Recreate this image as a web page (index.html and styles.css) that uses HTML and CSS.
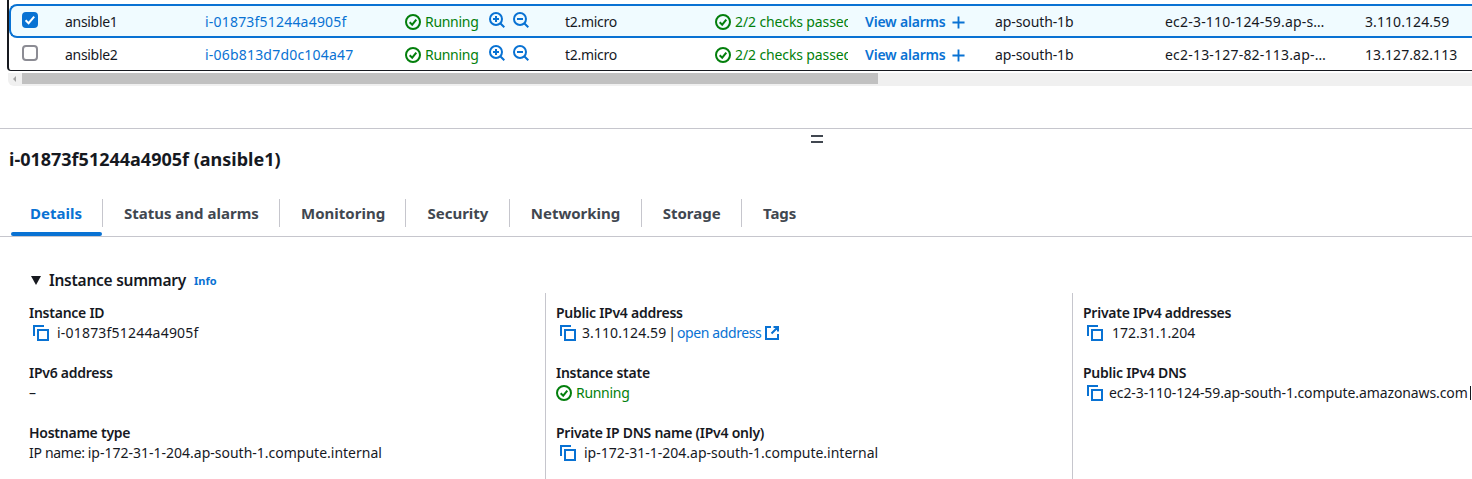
FILE: index.html
```html
<!DOCTYPE html>
<html lang="en">
<head>
    <meta charset="UTF-8">
    <meta name="viewport" content="width=device-width, initial-scale=1.0">
    <title>Instances</title>
    <link rel="stylesheet" href="styles.css">
</head>
<body>
    <svg class="icon-defs" aria-hidden="true">
        <symbol id="i-check" viewBox="0 0 16 16">
            <circle cx="8" cy="8" r="7" fill="none" stroke="currentColor" stroke-width="2"/>
            <path d="M4.7 8.2 7.2 10.7 11.3 5.6" fill="none" stroke="currentColor" stroke-width="2"/>
        </symbol>
        <symbol id="i-zoom-in" viewBox="0 0 16 16">
            <circle cx="7" cy="7" r="6" fill="none" stroke="currentColor" stroke-width="2"/>
            <path d="M11 11 15.3 15.3M4 7H10M7 4V10" fill="none" stroke="currentColor" stroke-width="2"/>
        </symbol>
        <symbol id="i-zoom-out" viewBox="0 0 16 16">
            <circle cx="7" cy="7" r="6" fill="none" stroke="currentColor" stroke-width="2"/>
            <path d="M11 11 15.3 15.3M4 7H10" fill="none" stroke="currentColor" stroke-width="2"/>
        </symbol>
        <symbol id="i-plus" viewBox="0 0 14 14">
            <path d="M0.5 7H13.5M7 0.5V13.5" fill="none" stroke="currentColor" stroke-width="2"/>
        </symbol>
        <symbol id="i-copy" viewBox="0 0 16 16">
            <path d="M1 11V1H11" fill="none" stroke="currentColor" stroke-width="2"/>
            <rect x="5" y="5" width="10" height="10" fill="none" stroke="currentColor" stroke-width="2"/>
        </symbol>
        <symbol id="i-external" viewBox="0 0 14 14">
            <path d="M6 1H1V13H13V8M8.5 1H13V5.5M13 1 6.5 7.5" fill="none" stroke="currentColor" stroke-width="2"/>
        </symbol>
    </svg>

    <div class="table">
        <div class="row row-selected">
            <span class="checkbox checked">
                <svg viewBox="0 0 16 16"><path d="M3.6 8.2 6.6 11.2 12.2 4.6" fill="none" stroke="#fff" stroke-width="2"/></svg>
            </span>
            <span class="tight">ansible1</span>
            <a href="#" class="wide-id">i-01873f51244a4905f</a>
            <span class="state">
                <span class="ok tight"><svg class="icon"><use href="#i-check"/></svg>Running</span>
                <svg class="zoom-icon first"><use href="#i-zoom-in"/></svg>
                <svg class="zoom-icon"><use href="#i-zoom-out"/></svg>
            </span>
            <span class="tight">t2.micro</span>
            <span class="checks ok"><svg class="icon"><use href="#i-check"/></svg>2/2 checks passed</span>
            <a href="#" class="alarms">View alarms <svg class="plus"><use href="#i-plus"/></svg></a>
            <span class="zone">ap-south-1b</span>
            <span class="wide-id">ec2-3-110-124-59.ap-s…</span>
            <span class="num">3.110.124.59</span>
        </div>
        <div class="row">
            <span class="checkbox"></span>
            <span class="tight">ansible2</span>
            <a href="#" class="wide-id">i-06b813d7d0c104a47</a>
            <span class="state">
                <span class="ok tight"><svg class="icon"><use href="#i-check"/></svg>Running</span>
                <svg class="zoom-icon first"><use href="#i-zoom-in"/></svg>
                <svg class="zoom-icon"><use href="#i-zoom-out"/></svg>
            </span>
            <span class="tight">t2.micro</span>
            <span class="checks ok"><svg class="icon"><use href="#i-check"/></svg>2/2 checks passed</span>
            <a href="#" class="alarms">View alarms <svg class="plus"><use href="#i-plus"/></svg></a>
            <span class="zone">ap-south-1b</span>
            <span class="wide-id">ec2-13-127-82-113.ap-…</span>
            <span class="num">13.127.82.113</span>
        </div>
    </div>
    <div class="scrollbar">
        <span class="scroll-arrow"></span>
        <span class="scroll-thumb"></span>
    </div>

    <div class="split">
        <div class="split-handle"></div>
    </div>

    <h1 class="title">i-01873f51244a4905f (ansible1)</h1>

    <div class="tabs">
        <a href="#" class="tab active">Details</a>
        <a href="#" class="tab">Status and alarms</a>
        <a href="#" class="tab">Monitoring</a>
        <a href="#" class="tab">Security</a>
        <a href="#" class="tab">Networking</a>
        <a href="#" class="tab">Storage</a>
        <a href="#" class="tab last">Tags</a>
    </div>

    <h2 class="section"><span class="caret"></span>Instance summary <a href="#" class="info">Info</a></h2>

    <div class="details">
        <div class="column">
            <div class="item">
                <div class="label">Instance ID</div>
                <div class="value"><svg class="copy"><use href="#i-copy"/></svg><span class="wide-id">i-01873f51244a4905f</span></div>
            </div>
            <div class="item">
                <div class="label">IPv6 address</div>
                <div class="value">–</div>
            </div>
            <div class="item">
                <div class="label">Hostname type</div>
                <div class="value"><span class="prefix">IP name:</span>ip-172-31-1-204.ap-south-1.compute.internal</div>
            </div>
        </div>
        <div class="column">
            <div class="item">
                <div class="label">Public IPv4 address</div>
                <div class="value"><svg class="copy narrow"><use href="#i-copy"/></svg><span class="num">3.110.124.59</span><span class="sep">|</span><a href="#" class="open-link">open address</a><svg class="external"><use href="#i-external"/></svg></div>
            </div>
            <div class="item">
                <div class="label">Instance state</div>
                <div class="value ok tight"><svg class="icon"><use href="#i-check"/></svg>Running</div>
            </div>
            <div class="item">
                <div class="label">Private IP DNS name (IPv4 only)</div>
                <div class="value"><svg class="copy"><use href="#i-copy"/></svg>ip-172-31-1-204.ap-south-1.compute.internal</div>
            </div>
        </div>
        <div class="column">
            <div class="item">
                <div class="label">Private IPv4 addresses</div>
                <div class="value"><svg class="copy wide"><use href="#i-copy"/></svg>172.31.1.204</div>
            </div>
            <div class="item">
                <div class="label">Public IPv4 DNS</div>
                <div class="value"><svg class="copy narrow"><use href="#i-copy"/></svg><span class="long-dns">ec2-3-110-124-59.ap-south-1.compute.amazonaws.com</span><span class="cut-bar"></span></div>
            </div>
        </div>
    </div>
</body>
</html>
```

FILE: styles.css
```css
* {
    box-sizing: border-box;
}
html, body {
    height: 479px;
    overflow: hidden;
}
body {
    margin: 0;
    background: #fff;
    color: #16191f;
    font-family: "Noto Sans", sans-serif;
    font-size: 14px;
    line-height: 20px;
}
a {
    color: #0972d3;
    text-decoration: none;
}
.icon-defs {
    display: none;
}
.ok {
    color: #037f0c;
}
.tight {
    letter-spacing: -0.3px;
}
.wide-id {
    letter-spacing: 0.2px;
}
.num {
    letter-spacing: 0.08px;
}
.zone {
    letter-spacing: -0.1px;
}

/* instance table */
.table {
    margin-left: 7px;
    height: 71px;
    padding-top: 4px;
    border-left: 2px solid #16191f;
    border-bottom: 1px solid #16191f;
    border-bottom-left-radius: 4px;
}
.row {
    display: grid;
    grid-template-columns: 43px 140px 200px 160px 150px 150px 130px 170px 200px 1fr;
    align-items: center;
    height: 32px;
    padding-left: 13px;
    padding-top: 2px;
    white-space: nowrap;
}
.row-selected {
    height: 34px;
    padding-left: 11px;
    border: 2px solid #0972d3;
    border-right: none;
    border-radius: 8px 0 0 8px;
    background: #f0fbff;
}
.checkbox {
    display: block;
    width: 16px;
    height: 16px;
    margin-bottom: 4px;
    border: 2px solid #8c8c94;
    border-radius: 4px;
    background: #fff;
}
.checkbox.checked {
    border: none;
    background: #0972d3;
}
.checkbox svg {
    display: block;
    width: 16px;
    height: 16px;
}
.state {
    display: flex;
    align-items: center;
}
.state .ok,
.checks {
    display: flex;
    align-items: center;
}
.icon {
    flex: none;
    width: 16px;
    height: 16px;
    margin-right: 4px;
}
.zoom-icon {
    width: 16px;
    height: 16px;
    margin: 0 0 4px 8px;
    color: #0972d3;
}
.zoom-icon.first {
    margin-left: 11px;
}
.checks {
    width: 133px;
    overflow: hidden;
    letter-spacing: -0.12px;
}
.alarms {
    display: flex;
    align-items: center;
    font-weight: 600;
    letter-spacing: -0.2px;
}
.plus {
    width: 13px;
    height: 13px;
    margin-left: 6px;
}

/* horizontal scroll */
.scrollbar {
    display: flex;
    height: 13px;
    margin: 2px 0 0 8px;
    background: #f0f0f0;
    border-radius: 0 0 0 6px;
}
.scroll-arrow {
    width: 14px;
    position: relative;
}
.scroll-arrow::before {
    content: "";
    position: absolute;
    left: 5px;
    top: 3px;
    border: 3px solid transparent;
    border-left: none;
    border-right: 3px solid #a3a3a3;
}
.scroll-thumb {
    width: 856px;
    height: 11px;
    background: #c1c1c1;
}

/* split panel */
.split {
    margin-top: 42px;
    border-top: 1px solid #c6c6cd;
}
.split-handle {
    width: 12px;
    height: 8px;
    margin: 6px 0 0 811px;
    border-top: 2px solid #414750;
    border-bottom: 2px solid #414750;
}
.title {
    margin: 4px 0 0 9px;
    font-size: 18px;
    line-height: 24px;
    font-weight: 700;
}

/* tabs */
.tabs {
    display: flex;
    align-items: flex-start;
    height: 38px;
    margin-top: 28px;
    padding-left: 11px;
    border-bottom: 1px solid #c6c6cd;
    font-size: 15px;
}
.tab {
    height: 28px;
    padding: 0 20.3px 0 21px;
    border-right: 1px solid #c6c6cd;
    color: #414750;
    font-weight: 700;
    line-height: 28px;
    position: relative;
}
.tab.last {
    border-right: none;
}
.tab.active {
    color: #0972d3;
    padding: 0 20px 0 19px;
}
.tab.active::after {
    content: "";
    position: absolute;
    left: 0;
    right: 0;
    top: 33px;
    height: 4px;
    border-radius: 2px;
    background: #0972d3;
}

/* summary */
.section {
    display: flex;
    align-items: center;
    margin: 31px 0 0 31px;
    font-size: 15.5px;
    line-height: 22px;
    font-weight: 600;
    letter-spacing: -0.25px;
}
.caret {
    width: 0;
    height: 0;
    margin-right: 8px;
    border-style: solid;
    border-width: 9px 5px 0;
    border-color: #16191f transparent transparent;
}
.info {
    margin: 2px 0 0 8px;
    font-size: 11px;
    font-weight: 700;
    letter-spacing: 0;
}
.details {
    display: grid;
    grid-template-columns: 516px 527px 1fr;
    margin: 1px 0 0 29px;
}
.column + .column {
    height: 186px;
    padding-left: 10px;
    border-left: 1px solid #c6c6cd;
}
.column {
    padding-top: 10px;
}
.item {
    height: 60px;
}
.label {
    font-weight: 600;
    letter-spacing: -0.25px;
}
.value {
    display: flex;
    align-items: center;
    white-space: nowrap;
}
.prefix {
    margin-right: 3px;
    letter-spacing: -0.3px;
}
.copy {
    flex: none;
    width: 16px;
    height: 16px;
    margin: 0 8px 0 4px;
    color: #0972d3;
}
.copy.narrow {
    margin-right: 6px;
}
.copy.wide {
    margin-right: 9px;
}
.sep {
    margin: 0 1px 0 2px;
}
.open-link {
    letter-spacing: -0.4px;
}
.external {
    width: 14px;
    height: 14px;
    margin-left: 4px;
    color: #0972d3;
}
.long-dns {
    letter-spacing: -0.1px;
}
.cut-bar {
    width: 1px;
    height: 14px;
    margin-left: 2px;
    background: #16191f;
}
```
